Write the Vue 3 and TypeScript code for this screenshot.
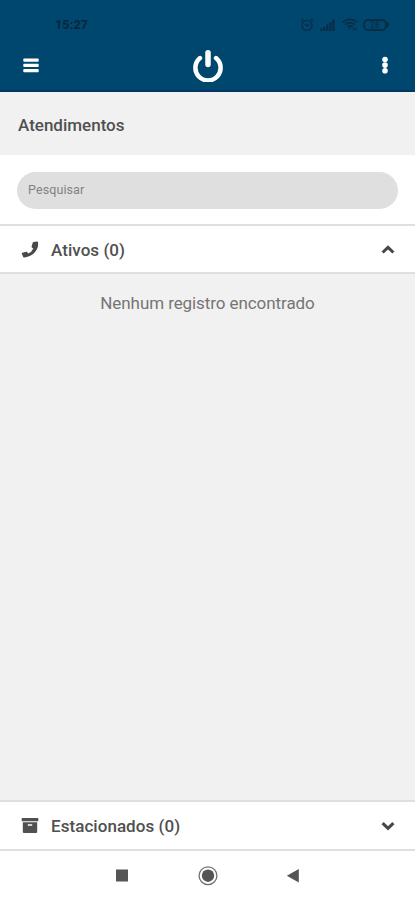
<script setup lang="ts">
import { ref } from 'vue'

const time = '15:27'
const search = ref('')
const activeOpen = ref(true)
const parkedOpen = ref(false)
</script>

<template>
  <div class="screen">
    <header class="header">
      <div class="status">
        <span class="time">{{ time }}</span>
        <div class="indicators">
          <svg class="alarm" width="14" height="14" viewBox="0 0 14 14" fill="none" stroke="currentColor" stroke-width="1.3">
            <circle cx="7" cy="7.4" r="5" />
            <path d="M4.8 6 7 8l2.2-1.4M1 3.2 3.4 1.2M13 3.2 10.6 1.2" />
          </svg>
          <svg class="signal" width="15" height="12" viewBox="0 0 15 12" fill="currentColor">
            <path d="M0 9.3h2.2V12H0zM3.1 7.7h2.2V12H3.1zM6.2 5.5h2.2V12H6.2zM9.3 3.2h2.2V12H9.3zM12.4 .5h2.2V12h-2.2z" />
          </svg>
          <svg class="wifi" width="16" height="13" viewBox="0 0 16 13" fill="none" stroke="currentColor" stroke-width="1.7">
            <path d="M.8 4.3C4.8.5 11.2.5 15.2 4.3M3.3 6.7c2.8-2.4 6.6-2.4 9.4 0M5.6 9c1.4-1.2 3.4-1.2 4.8 0" />
            <path d="M8 9.5v2M11.5 9.5v3M13.8 9.5v3" stroke-width="1.2" />
          </svg>
          <span class="battery">28</span>
          <i class="battery-tip"></i>
        </div>
      </div>
      <div class="toolbar">
        <button class="tool" aria-label="Menu">
          <svg width="16" height="15" viewBox="0 0 16 15" fill="#fff">
            <rect x=".3" y=".4" width="15.4" height="3.3" rx=".7" />
            <rect x=".3" y="5.7" width="15.4" height="3.3" rx=".7" />
            <rect x=".3" y="11" width="15.4" height="3.3" rx=".7" />
          </svg>
        </button>
        <svg class="logo" width="32" height="34" viewBox="0 0 32 34" fill="none" stroke="#fff" stroke-linecap="round">
          <path d="M8 10.1A12.6 12.6 0 1 0 24 10.1" stroke-width="4.5" />
          <path d="M16 4.7v11.8" stroke-width="5.5" />
        </svg>
        <button class="tool" aria-label="Opções">
          <svg width="6" height="18" viewBox="0 0 6 18" fill="#fff">
            <circle cx="3" cy="3.5" r="2.8" />
            <circle cx="3" cy="9.1" r="2.8" />
            <circle cx="3" cy="14.7" r="2.8" />
          </svg>
        </button>
      </div>
    </header>

    <h1 class="title"><span>Atendimentos</span></h1>
    <div class="search"><input v-model="search" type="text" placeholder="Pesquisar" /></div>

    <button class="section" @click="activeOpen = !activeOpen">
      <svg class="lead" width="18" height="18" viewBox="0 0 18 18" fill="#484848">
        <path d="m12.6.9 3.5-.3q.7 0 .9.7C18 8.8 12 15.6 3.2 16.4q-.7.1-1-.5L.8 12.7q-.2-.8.5-1l3.9-1q.7-.2 1 .4l.8 1.5q3.7-1.3 5.3-5.2L10.9 6.500q-.5-.4-.3-1l1.200-4q.2-.6.8-.6z" />
      </svg>
      <span class="label">Ativos (0)</span>
      <svg class="chevron" width="14" height="10" viewBox="0 0 14 10" fill="none" stroke="#484848" stroke-width="3.1">
        <path :d="activeOpen ? 'M1.600 7.500 7 2.300l5.400 5.200' : 'M1.600 2.200 7 7.400l5.400-5.200'" />
      </svg>
    </button>

    <main class="content"><p v-if="activeOpen" class="empty">Nenhum registro encontrado</p></main>

    <button class="section parked" @click="parkedOpen = !parkedOpen">
      <svg class="lead" width="18" height="18" viewBox="0 0 18 18" fill="#505050">
        <path d="M1.3 1h15.4q.6 0 .6.6v2.6H.7V1.6q0-.6.6-.6z" />
        <path fill-rule="evenodd" d="M1.8 5.3h14.4v9.8q0 .8-.8.8H2.6q-.8 0-.8-.8zm5 2v1.5h4.4V7.3z" />
      </svg>
      <span class="label">Estacionados (0)</span>
      <svg class="chevron" width="14" height="10" viewBox="0 0 14 10" fill="none" stroke="#484848" stroke-width="3.1">
        <path :d="parkedOpen ? 'M1.600 7.500 7 2.300l5.400 5.200' : 'M1.600 2.200 7 7.400l5.400-5.200'" />
      </svg>
    </button>

    <nav class="system-nav">
      <svg width="20" height="20" viewBox="0 0 20 20"><rect x="4" y="3.500" width="12" height="12" fill="#555" /></svg>
      <svg width="20" height="20" viewBox="0 0 20 20">
        <circle cx="10" cy="9.700" r="8.900" fill="none" stroke="#707070" stroke-width="1.3" />
        <circle cx="10" cy="9.700" r="6.200" fill="#555" />
      </svg>
      <svg width="20" height="20" viewBox="0 0 20 20"><path d="M2.800 9.700 14.800 3v13.4z" fill="#555" /></svg>
    </nav>
  </div>
</template>

<style>
body {
  margin: 0;
}
</style>

<style scoped>
.screen {
  display: flex;
  flex-direction: column;
  height: 900px;
  background: #f1f1f1;
  font-family: Roboto, sans-serif;
  color: #505050;
}
.screen * {
  box-sizing: border-box;
}
button {
  border: 0;
  padding: 0;
  font: inherit;
  color: inherit;
  background: none;
}
svg {
  display: block;
  flex: none;
}
.header {
  height: 92px;
  background: #00476f;
  border-bottom: 2px solid #073563;
}
.status {
  display: flex;
  justify-content: space-between;
  align-items: center;
  height: 40px;
  padding: 9px 26px 0 55px;
  color: #0b2c45;
}
.time {
  font-size: 12.5px;
  font-weight: 700;
  letter-spacing: 0.2px;
  color: #08263b;
}
.indicators {
  display: flex;
  align-items: center;
}
.signal {
  margin-left: 6px;
}
.wifi {
  margin-left: 7px;
}
.battery {
  width: 24px;
  height: 12px;
  margin-left: 5px;
  border: 2px solid currentColor;
  border-radius: 5px;
  font-size: 8.5px;
  font-weight: 500;
  line-height: 9px;
  text-align: center;
}
.battery-tip {
  width: 2px;
  height: 5px;
  border-radius: 0 2px 2px 0;
  background: currentColor;
}
.toolbar {
  display: grid;
  grid-template-columns: 1fr 32px 1fr;
  align-items: center;
  height: 50px;
  padding: 0 27px;
}
.tool {
  justify-self: start;
  margin-left: -4px;
}
.tool:last-child {
  justify-self: end;
  margin-left: 0;
}
.title {
  display: flex;
  align-items: center;
  height: 63px;
  margin: 0;
  padding: 3px 18px 0;
  font-size: 17px;
  font-weight: 500;
  line-height: 20px;
}
.search {
  height: 69px;
  padding: 17px 17px 0;
  background: #fff;
}
.search input {
  display: block;
  width: 100%;
  height: 37px;
  padding: 0 11px 2px;
  border: 0;
  border-radius: 19px;
  outline: 0;
  background: #dfdfdf;
  font: 12.5px Roboto, sans-serif;
  letter-spacing: 0.1px;
  color: #505050;
}
.search input::placeholder {
  color: #7f8386;
  opacity: 1;
}
.section {
  display: flex;
  align-items: center;
  height: 50px;
  padding: 1px 20px 0 21px;
  border-top: 2px solid #dfdfdf;
  border-bottom: 2px solid #dfdfdf;
  background: #fff;
  text-align: left;
}
.label {
  margin-left: 12px;
  font-size: 17px;
  font-weight: 500;
  letter-spacing: 0.05px;
}
.chevron {
  margin-left: auto;
}
.content {
  flex: 1;
}
.empty {
  margin: 18px 0 0;
  text-align: center;
  font-size: 17px;
  letter-spacing: -0.08px;
  line-height: 22px;
  color: #757575;
}
.parked {
  height: 51px;
}
.system-nav {
  display: grid;
  grid-template-columns: repeat(3, 20px);
  column-gap: 66px;
  align-items: center;
  justify-content: center;
  height: 49px;
  background: #fff;
}
</style>
